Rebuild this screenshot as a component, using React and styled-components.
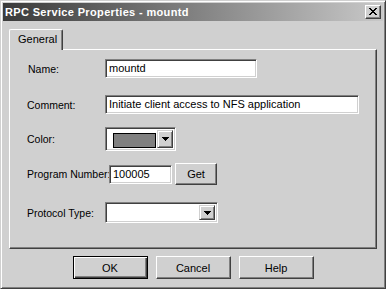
import React from 'react'
import styled, { createGlobalStyle } from 'styled-components'

const GlobalStyle = createGlobalStyle`
  html, body {
    margin: 0;
    padding: 0;
    background: #d0d0d0;
  }
  * {
    box-sizing: border-box;
  }
`

const Window = styled.div`
  width: 386px;
  height: 289px;
  background: #d0d0d0;
  border: 1px solid;
  border-color: #d0d0d0 #404040 #404040 #d0d0d0;
  box-shadow: inset 1px 1px #ffffff, inset -1px -1px #808080;
  padding: 2px;
  display: flex;
  flex-direction: column;
  font-family: "Liberation Sans", Arial, sans-serif;
  color: #000;
`

const TitleBar = styled.div`
  height: 18px;
  display: flex;
  align-items: center;
  justify-content: space-between;
  padding: 0 2px 0 2px;
  background: linear-gradient(to right, #3a3a3a, #c8c8c8);
`

const Title = styled.span`
  color: #fff;
  font-weight: bold;
  font-size: 11px;
  letter-spacing: 0.35px;
`

const CloseButton = styled.div`
  width: 16px;
  height: 14px;
  background: #d0d0d0;
  border: 1px solid;
  border-color: #ffffff #404040 #404040 #ffffff;
  box-shadow: inset -1px -1px #808080;
  display: flex;
  align-items: center;
  justify-content: center;
  padding-bottom: 1px;
`

const Body = styled.div`
  flex: 1;
  display: flex;
  flex-direction: column;
  padding: 8px 6px 0 6px;
`

const TabStrip = styled.div`
  display: flex;
  position: relative;
  z-index: 1;
  margin-bottom: -1px;
`

const Tab = styled.div`
  width: 54px;
  height: 21px;
  background: #d0d0d0;
  border-top: 1px solid #fff;
  border-left: 1px solid #fff;
  border-right: 1px solid #404040;
  border-top-left-radius: 2px;
  border-top-right-radius: 2px;
  box-shadow: inset -1px 0 #808080;
  font-size: 11px;
  padding: 3px 0 0 8px;
`

const Panel = styled.div`
  height: 200px;
  border: 1px solid;
  border-color: #ffffff #404040 #404040 #ffffff;
  box-shadow: inset -1px -1px #808080;
  padding: 0 0 0 17px;
  display: flex;
  flex-direction: column;
`

const Row = styled.div`
  display: flex;
  align-items: center;
  height: ${p => p.$h}px;
  margin-top: ${p => p.$mt}px;
`

const Label = styled.span`
  font-size: 10.5px;
  width: ${p => (p.$w ? `${p.$w}px` : 'auto')};
  padding-left: ${p => p.$pl || 0}px;
  white-space: nowrap;
  flex-shrink: 0;
`

const sunken = `
  border: 1px solid;
  border-color: #808080 #ffffff #ffffff #808080;
  box-shadow: inset 1px 1px #404040, inset -1px -1px #d0d0d0;
  background: #fff;
`

const TextBox = styled.div`
  ${sunken}
  width: ${p => p.$w}px;
  height: 19px;
  font-size: 11px;
  padding: 2px 3px 0 3px;
  white-space: nowrap;
  overflow: hidden;
`

const Combo = styled.div`
  ${sunken}
  width: ${p => p.$w}px;
  height: ${p => p.$h}px;
  display: flex;
  align-items: stretch;
  justify-content: space-between;
  padding: 2px;
`

const Swatch = styled.div`
  width: 43px;
  height: 15px;
  margin: 3px 0 0 5px;
  border: 1px solid #000;
  background: #808080;
`

const DropButton = styled.div`
  width: 16px;
  background: #d0d0d0;
  border: 1px solid;
  border-color: #d0d0d0 #404040 #404040 #d0d0d0;
  box-shadow: inset 1px 1px #ffffff, inset -1px -1px #808080;
  display: flex;
  align-items: center;
  justify-content: center;
`

const PushButton = styled.div`
  width: ${p => p.$w}px;
  height: ${p => p.$h}px;
  margin-left: ${p => p.$ml || 0}px;
  background: #d0d0d0;
  border: 1px solid;
  border-color: ${p => (p.$default ? '#000 #000 #000 #000' : '#ffffff #404040 #404040 #ffffff')};
  box-shadow: ${p =>
    p.$default
      ? 'inset 1px 1px #ffffff, inset -1px -1px #404040, inset -2px -2px #808080'
      : 'inset -1px -1px #808080'};
  display: flex;
  align-items: center;
  justify-content: center;
  font-size: 11px;
`

const ButtonRow = styled.div`
  display: flex;
  justify-content: center;
  gap: 8px;
  margin-top: 7px;
`

const CloseGlyph = () => {
  const rects = []
  for (let i = 0; i < 7; i++) {
    rects.push(<rect key={`a${i}`} x={i} y={i} width={2} height={1} />)
    rects.push(<rect key={`b${i}`} x={6 - i} y={i} width={2} height={1} />)
  }
  return (
    <svg width="8" height="7" viewBox="0 0 8 7" shapeRendering="crispEdges" fill="#000">
      {rects}
    </svg>
  )
}

const Arrow = () => (
  <svg width="7" height="4" viewBox="0 0 7 4" shapeRendering="crispEdges" fill="#000">
    <rect x="0" y="0" width="7" height="1" />
    <rect x="1" y="1" width="5" height="1" />
    <rect x="2" y="2" width="3" height="1" />
    <rect x="3" y="3" width="1" height="1" />
  </svg>
)

export default function App() {
  return (
    <>
      <GlobalStyle />
      <Window>
        <TitleBar>
          <Title>RPC Service Properties - mountd</Title>
          <CloseButton>
            <CloseGlyph />
          </CloseButton>
        </TitleBar>
        <Body>
          <TabStrip>
            <Tab>General</Tab>
          </TabStrip>
          <Panel>
            <Row $h={19} $mt={9}>
              <Label $w={78} $pl={1}>Name:</Label>
              <TextBox $w={152}>mountd</TextBox>
            </Row>
            <Row $h={19} $mt={17}>
              <Label $w={78}>Comment:</Label>
              <TextBox $w={254}>Initiate client access to NFS application</TextBox>
            </Row>
            <Row $h={24} $mt={13}>
              <Label $w={78}>Color:</Label>
              <Combo $w={71} $h={24}>
                <Swatch />
                <DropButton>
                  <Arrow />
                </DropButton>
              </Combo>
            </Row>
            <Row $h={22} $mt={12}>
              <Label $w={82}>Program Number:</Label>
              <TextBox $w={63}>100005</TextBox>
              <PushButton $w={42} $h={22} $ml={3}>Get</PushButton>
            </Row>
            <Row $h={21} $mt={17}>
              <Label $w={78}>Protocol Type:</Label>
              <Combo $w={113} $h={21}>
                <span />
                <DropButton>
                  <Arrow />
                </DropButton>
              </Combo>
            </Row>
          </Panel>
          <ButtonRow>
            <PushButton $w={75} $h={23} $default>OK</PushButton>
            <PushButton $w={75} $h={23}>Cancel</PushButton>
            <PushButton $w={75} $h={23}>Help</PushButton>
          </ButtonRow>
        </Body>
      </Window>
    </>
  )
}
